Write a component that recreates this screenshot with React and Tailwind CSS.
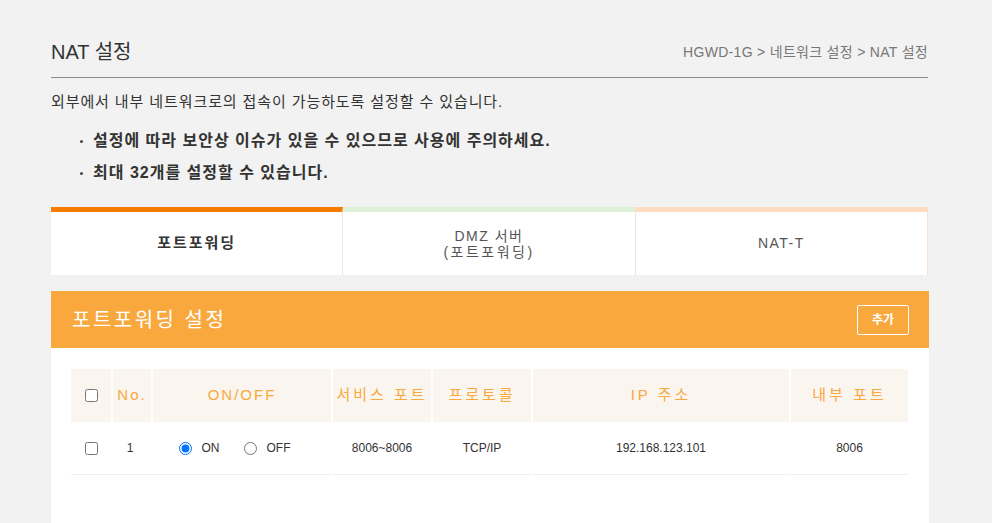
import React from "react";

const FONT = { fontFamily: '"Liberation Sans", "Noto Sans CJK KR", sans-serif' };

function HeadCell({ children, className = "" }) {
  return (
    <div className={"h-[53px] bg-[#faf5ee] flex items-center justify-center text-[15px] tracking-[2px] text-[#f9a83e] " + className}>
      {children}
    </div>
  );
}

function BodyCell({ children, className = "" }) {
  return (
    <div className={"h-[53px] border-b border-[#eeeeee] flex items-center justify-center text-[12px] text-[#333] " + className}>
      {children}
    </div>
  );
}

export default function App() {
  return (
    <div className="min-h-screen bg-[#f2f2f2]" style={FONT}>
      <div className="ml-[51px] w-[878px] pt-[40px] pb-[40px]">
        {/* Header */}
        <div className="w-[877px] flex items-center justify-between pb-[13px] border-b border-[#8c8c8c]">
          <h1 className="text-[20px] leading-[24px] text-[#333]">NAT 설정</h1>
          <div className="text-[14px] leading-[24px] tracking-[0.3px] text-[#777]">HGWD-1G &gt; 네트워크 설정 &gt; NAT 설정</div>
        </div>

        <p className="mt-[14px] text-[15px] leading-[20px] tracking-[0.9px] text-[#333]">
          외부에서 내부 네트워크로의 접속이 가능하도록 설정할 수 있습니다.
        </p>
        <ul className="mt-[13px]">
          <li className="flex items-center h-[32px] text-[16px] font-bold tracking-[1px] text-[#333]">
            <span className="ml-[29px] mr-[10px] w-[3px] h-[3px] rounded-full bg-[#444]" />
            설정에 따라 보안상 이슈가 있을 수 있으므로 사용에 주의하세요.
          </li>
          <li className="flex items-center h-[32px] text-[16px] font-bold tracking-[1px] text-[#333]">
            <span className="ml-[29px] mr-[10px] w-[3px] h-[3px] rounded-full bg-[#444]" />
            최대 32개를 설정할 수 있습니다.
          </li>
        </ul>

        {/* Tabs */}
        <div className="mt-[18px] w-[877px] grid grid-cols-3">
          <div className="h-[68px] bg-white border-t-[5px] border-t-[#f57c00] border-r border-r-[#f3e3d3] flex items-center justify-center text-[15px] tracking-[2px] font-bold text-[#333]">
            포트포워딩
          </div>
          <div className="h-[68px] bg-white border-t-[5px] border-t-[#dff0d8] border-r border-r-[#f3e3d3] flex flex-col items-center justify-center text-[14px] leading-[16px] tracking-[1.5px] text-[#555]">
            <span>DMZ 서버</span>
            <span className="tracking-[2.5px]">(포트포워딩)</span>
          </div>
          <div className="h-[68px] bg-white border-t-[5px] border-t-[#fddcc0] border-r border-r-[#f3e3d3] flex items-center justify-center text-[14px] tracking-[1.5px] text-[#555]">
            NAT-T
          </div>
        </div>

        {/* Panel */}
        <div className="mt-[16px] w-[878px]">
          <div className="h-[57px] bg-[#f9a83e] flex items-center justify-between pl-[21px] pr-[20px]">
            <h2 className="text-[20px] tracking-[2.5px] text-white">포트포워딩 설정</h2>
            <button className="w-[52px] h-[30px] mt-[1px] border border-white rounded-[2px] text-[12px] font-bold text-white">
              추가
            </button>
          </div>
          <div className="bg-white px-[20px] pt-[21px] pb-[60px]">
            <div className="w-[837px] grid grid-cols-[40px_38px_178px_98px_98px_256px_117px] gap-x-[2px]">
              <HeadCell>
                <input type="checkbox" className="w-[13px] h-[13px] m-0" />
              </HeadCell>
              <HeadCell>No.</HeadCell>
              <HeadCell>ON/OFF</HeadCell>
              <HeadCell className="tracking-[3px]">서비스 포트</HeadCell>
              <HeadCell className="tracking-[3px]">프로토콜</HeadCell>
              <HeadCell className="tracking-[3px]">IP 주소</HeadCell>
              <HeadCell className="tracking-[3px]">내부 포트</HeadCell>

              <BodyCell>
                <input type="checkbox" className="w-[13px] h-[13px] m-0" />
              </BodyCell>
              <BodyCell className="pr-[4px]">1</BodyCell>
              <BodyCell className="pr-[15px]">
                <label className="flex items-center gap-[10px] mr-[24px]">
                  <input type="radio" name="onoff" defaultChecked className="w-[13px] h-[13px] m-0" />
                  <span>ON</span>
                </label>
                <label className="flex items-center gap-[10px]">
                  <input type="radio" name="onoff" className="w-[13px] h-[13px] m-0" />
                  <span>OFF</span>
                </label>
              </BodyCell>
              <BodyCell>8006~8006</BodyCell>
              <BodyCell>TCP/IP</BodyCell>
              <BodyCell>192.168.123.101</BodyCell>
              <BodyCell>8006</BodyCell>
            </div>
          </div>
        </div>
      </div>
    </div>
  );
}
